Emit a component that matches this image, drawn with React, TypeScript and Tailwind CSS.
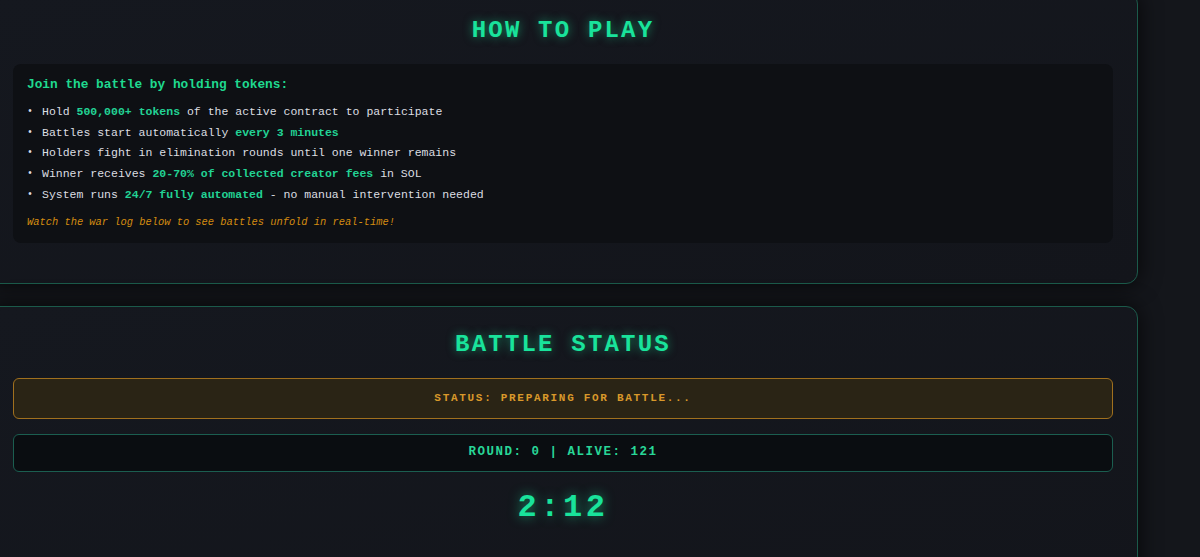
const mono = "font-['Liberation_Mono','Courier_New',monospace]";

const Hl = ({ children }: { children: React.ReactNode }) => (
  <span className="font-bold text-[#22d394]">{children}</span>
);

const rules: React.ReactNode[] = [
  <>
    Hold <Hl>500,000+ tokens</Hl> of the active contract to participate
  </>,
  <>
    Battles start automatically <Hl>every 3 minutes</Hl>
  </>,
  <>Holders fight in elimination rounds until one winner remains</>,
  <>
    Winner receives <Hl>20-70% of collected creator fees</Hl> in SOL
  </>,
  <>
    System runs <Hl>24/7 fully automated</Hl> - no manual intervention needed
  </>,
];

const Title = ({ children }: { children: React.ReactNode }) => (
  <h2 className="text-center text-[24px] leading-[28px] font-bold tracking-[2.2px] text-[#19e39b] [text-shadow:0_0_10px_rgba(25,227,155,0.55)]">
    {children}
  </h2>
);

export default function App() {
  return (
    <div className={`min-h-screen w-full overflow-hidden bg-[#14161b] ${mono}`}>
      <div className="-ml-[12px] -mt-[8px] flex w-[1150px] flex-col gap-[22px]">
        {/* how to play */}
        <section className="rounded-xl border border-[#1b5a4a] bg-gradient-to-br from-[#15181f] to-[#13151b] px-[24px] pt-[24px] pb-[40px] shadow-[0_0_22px_rgba(0,0,0,0.75)]">
          <Title>HOW TO PLAY</Title>
          <div className="mt-[19px] rounded-lg bg-[#0e1014] px-[14px] pt-[13px] pb-[14px]">
            <p className="text-[12.8px] leading-[16px] font-bold text-[#1fd98f]">
              Join the battle by holding tokens:
            </p>
            <ul className="mt-[8px] text-[11.5px] text-[#dcdee2]">
              {rules.map((r, i) => (
                <li key={i} className="flex h-[20.75px] items-center">
                  <span className="w-[15px] text-[10px]">•</span>
                  <span>{r}</span>
                </li>
              ))}
            </ul>
            <p className="mt-[10px] text-[10.4px] leading-[14px] italic text-[#d48c10]">
              Watch the war log below to see battles unfold in real-time!
            </p>
          </div>
        </section>

        {/* battle status */}
        <section className="h-[300px] rounded-xl border border-[#1b5a4a] bg-gradient-to-br from-[#15181f] to-[#13151b] px-[24px] pt-[24px] shadow-[0_0_22px_rgba(0,0,0,0.75)]">
          <Title>BATTLE STATUS</Title>
          <div className="mt-[19px] flex h-[41px] items-center justify-center rounded-md border border-[#a0701e] bg-[#2a2415]">
            <span className="text-[11px] font-bold tracking-[1.7px] text-[#d9982a]">
              STATUS: PREPARING FOR BATTLE...
            </span>
          </div>
          <div className="mt-[15px] flex h-[38px] items-center justify-center rounded-md border border-[#1b5e50] bg-[#0a0d11]">
            <span className="text-[12.5px] font-bold tracking-[1.5px] text-[#28d698]">
              ROUND: 0 | ALIVE: 121
            </span>
          </div>
          <div className="mt-[18px] text-center text-[32px] leading-[36px] font-bold tracking-[3.5px] text-[#19e39b] [text-shadow:0_0_12px_rgba(25,227,155,0.6)]">
            2:12
          </div>
        </section>
      </div>
    </div>
  );
}
